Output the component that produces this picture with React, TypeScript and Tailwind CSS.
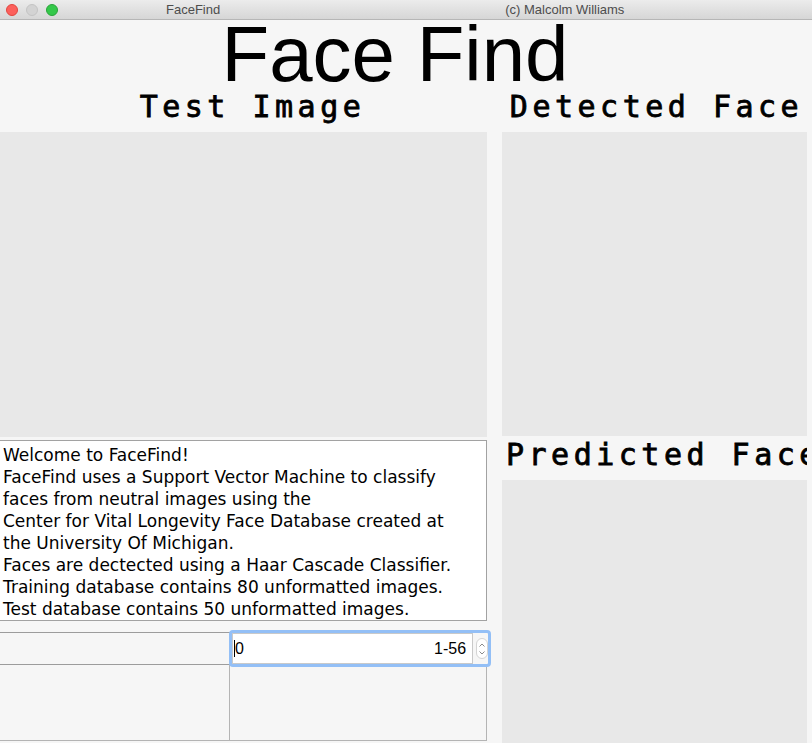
import React from 'react';

const mono = { fontFamily: '"DejaVu Sans Mono", "Liberation Mono", monospace' };

function TitleBar() {
  return (
    <div className="flex h-5 items-center border-b border-[#b6b6b6] bg-gradient-to-b from-[#ececec] to-[#d6d6d6] font-['Liberation_Sans',sans-serif] text-[13px] text-[#4d4d4d]">
      <div className="ml-[6px] flex gap-2">
        <span className="h-3 w-3 rounded-full border border-[#e2463f] bg-[#fc605c]" />
        <span className="h-3 w-3 rounded-full border border-[#c4c4c4] bg-[#d3d3d3]" />
        <span className="h-3 w-3 rounded-full border border-[#2aa43a] bg-[#34c84a]" />
      </div>
      <span className="ml-[108px]">FaceFind</span>
      <span className="ml-[285px]">(c) Malcolm Williams</span>
    </div>
  );
}

function Header({ children, className = '' }: { children: React.ReactNode; className?: string }) {
  return (
    <div
      className={`h-[44px] overflow-hidden whitespace-nowrap text-center text-[30px] leading-[38px] tracking-[4.5px] text-black [-webkit-text-stroke:0.8px_black] ${className}`}
      style={mono}
    >
      {children}
    </div>
  );
}

const infoLines = [
  'Welcome to FaceFind!',
  'FaceFind uses a Support Vector Machine to classify',
  'faces from neutral images using the',
  'Center for Vital Longevity Face Database created at',
  'the University Of Michigan.',
  'Faces are dectected using a Haar Cascade Classifier.',
  'Training database contains 80 unformatted images.',
  'Test database contains 50 unformatted images.',
];

function Spinner() {
  return (
    <div className="relative z-10 -ml-[1px] -mt-[2px] flex h-[37px] w-[262px] items-center rounded-[4px] border-[3px] border-[#93bff6] bg-[#f6f6f6]">
      <div className="flex h-full w-[243px] items-center border border-[#c9c9c9] bg-white pl-[1px] pr-[6px] font-['Liberation_Sans',sans-serif] text-[16px] text-black">
        <span className="h-[17px] w-px bg-black" />
        <span>0</span>
        <span className="ml-auto">1-56</span>
      </div>
      <div className="ml-[3px] flex h-[21px] w-[12px] flex-col items-center justify-center rounded-full border border-[#d4d4d4] bg-white">
        <svg width="8" height="14" viewBox="0 0 8 14" fill="none" stroke="#8a8a8a" strokeWidth="1">
          <path d="M1.5 4.5 L4 2 L6.5 4.5" />
          <path d="M1.5 9.5 L4 12 L6.5 9.5" />
        </svg>
      </div>
    </div>
  );
}

export default function App() {
  return (
    <div className="h-[743px] w-[812px] overflow-hidden bg-[#f6f6f6]">
      <TitleBar />

      <div className="h-[68px] whitespace-nowrap pr-[22px] text-center font-['Liberation_Sans',sans-serif] text-[78px] leading-[68px] text-black">
        Face Find
      </div>

      <div className="flex">
        {/* Left column */}
        <div className="w-[487px]">
          <Header className="pl-[18px]">Test Image</Header>
          <div className="h-[305px] bg-[#e8e8e8]" />

          <div className="mt-[3px] h-[181px] border border-l-0 border-[#a2a2a2] bg-white pl-[3px] pt-[3px] font-['DejaVu_Sans',sans-serif] text-[17px] leading-[22px] text-black">
            {infoLines.map((line) => (
              <div key={line} className="whitespace-nowrap">
                {line}
              </div>
            ))}
          </div>

          <div className="mt-[11px] grid grid-cols-[230px_257px]">
            <div className="h-[33px] border-y border-[#9c9c9c]" />
            <div className="h-[33px]">
              <Spinner />
            </div>
            <div className="h-[76px] border-b border-r border-[#b4b4b4]" />
            <div className="h-[76px] border-b border-r border-[#b4b4b4]" />
          </div>
        </div>

        {/* Right column */}
        <div className="ml-[15px] w-[305px]">
          <Header className="pl-[4px]">Detected Face</Header>
          <div className="h-[304px] bg-[#e8e8e8]" />
          <Header className="pl-[4px]">Predicted Face</Header>
          <div className="h-[270px] bg-[#e8e8e8]" />
        </div>
      </div>
    </div>
  );
}
